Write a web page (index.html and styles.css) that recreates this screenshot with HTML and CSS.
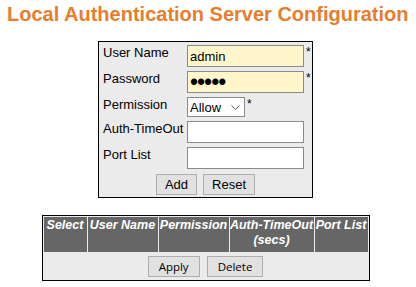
FILE: index.html
```html
<!DOCTYPE html>
<html lang="en">
<head>
    <meta charset="UTF-8">
    <title>Local Authentication Server Configuration</title>
    <link rel="stylesheet" href="styles.css">
</head>
<body>
    <div class="page">
        <h1>Local Authentication Server Configuration</h1>

        <form class="config-box">
            <div class="fields">
                <label class="field-label" for="userName">User Name</label>
                <div class="field">
                    <input type="text" id="userName" class="required" value="admin"><span class="star">*</span>
                </div>

                <label class="field-label" for="password">Password</label>
                <div class="field">
                    <input type="password" id="password" class="required secret" value="admin"><span class="star">*</span>
                </div>

                <label class="field-label" for="permission">Permission</label>
                <div class="field">
                    <span class="select-wrap">
                        <select id="permission">
                            <option>Allow</option>
                            <option>Deny</option>
                        </select>
                        <svg class="chevron" viewBox="0 0 9 5" width="9" height="5">
                            <path d="M0.5 0.5 L4.5 4.5 L8.5 0.5" fill="none" stroke="#555555" stroke-width="1"/>
                        </svg>
                    </span><span class="star">*</span>
                </div>

                <label class="field-label" for="authTimeout">Auth-TimeOut</label>
                <div class="field">
                    <input type="text" id="authTimeout">
                </div>

                <label class="field-label" for="portList">Port List</label>
                <div class="field">
                    <input type="text" id="portList">
                </div>
            </div>
            <div class="actions">
                <button type="button">Add</button>
                <button type="reset">Reset</button>
            </div>
        </form>

        <table class="user-table">
            <thead>
                <tr>
                    <th class="col-select">Select</th>
                    <th class="col-user">User Name</th>
                    <th class="col-perm">Permission</th>
                    <th class="col-timeout">Auth-TimeOut<br>(secs)</th>
                    <th class="col-ports">Port List</th>
                </tr>
            </thead>
            <tbody>
                <tr>
                    <td colspan="5">
                        <div class="actions table-actions">
                            <button type="button">Apply</button>
                            <button type="button">Delete</button>
                        </div>
                    </td>
                </tr>
            </tbody>
        </table>
    </div>
</body>
</html>
```
FILE: styles.css
```css
body {
    margin: 0;
    font-family: Arial, "Liberation Sans", sans-serif;
    font-size: 13px;
    color: #000000;
    background-color: #ffffff;
}
.page {
    width: 411px;
}
h1 {
    margin: 3px 0 0 7px;
    font-size: 20px;
    line-height: 23px;
    font-weight: bold;
    color: #e67e30;
    white-space: nowrap;
}
.config-box {
    width: 209px;
    margin: 15px auto 0;
    padding: 3px 0 2px 4px;
    border: 1px solid #000000;
    background-color: #ebebeb;
}
.fields {
    display: grid;
    grid-template-columns: 84px auto;
    row-gap: 4px;
    align-items: start;
}
.field-label {
    line-height: 15px;
    white-space: nowrap;
}
.field {
    display: flex;
    align-items: flex-start;
    line-height: 15px;
}
.field input {
    box-sizing: border-box;
    width: 117px;
    height: 22px;
    margin: 0;
    padding: 1px 2px;
    border: 1px solid #8a8a8a;
    font-family: Arial, "Liberation Sans", sans-serif;
    font-size: 13px;
    background-color: #ffffff;
}
.field input.required {
    background-color: #fff6cc;
}
.field input.secret {
    padding: 0 2px;
    font-size: 23px;
    line-height: 20px;
    letter-spacing: -1px;
}
.select-wrap {
    position: relative;
    display: block;
    height: 20px;
}
.field select {
    box-sizing: border-box;
    display: block;
    width: 58px;
    height: 20px;
    margin: 0;
    padding: 0 14px 0 2px;
    border: 1px solid #8a8a8a;
    border-radius: 0;
    appearance: none;
    -webkit-appearance: none;
    font-family: Arial, "Liberation Sans", sans-serif;
    font-size: 13px;
    color: #000000;
    background-color: #ffffff;
}
.chevron {
    position: absolute;
    top: 8px;
    right: 5px;
    pointer-events: none;
}
.star {
    margin-left: 2px;
    font-size: 12px;
}
.actions {
    display: flex;
    justify-content: center;
    gap: 6px;
    margin-top: 5px;
    padding-right: 4px;
}
.actions button {
    height: 21px;
    margin: 0;
    padding: 0 8px;
    border: 1px solid #adadad;
    background-color: #e1e1e1;
    font-family: Arial, "Liberation Sans", sans-serif;
    font-size: 13px;
    color: #000000;
}
.user-table {
    width: 328px;
    margin: 17px auto 0;
    table-layout: fixed;
    border: 1px solid #000000;
    border-spacing: 1px;
    background-color: #ebebeb;
}
.user-table th {
    box-sizing: border-box;
    height: 35px;
    padding: 1px 0 4px;
    vertical-align: top;
    background-color: #666666;
    color: #ffffff;
    font-size: 12.5px;
    font-style: italic;
    font-weight: bold;
    line-height: 15px;
    white-space: nowrap;
}
.col-select { width: 43px; }
.col-user { width: 70px; }
.col-perm { width: 70px; }
.col-timeout { width: 84px; }
.col-ports { width: 53px; }
.user-table td {
    padding: 3px 0 2px;
}
.table-actions {
    gap: 7px;
    margin-top: 0;
    padding-right: 0;
}
.table-actions button {
    padding: 0 10px;
    font-family: "Open Sans", "Noto Sans", sans-serif;
    font-size: 11.5px;
}
```
